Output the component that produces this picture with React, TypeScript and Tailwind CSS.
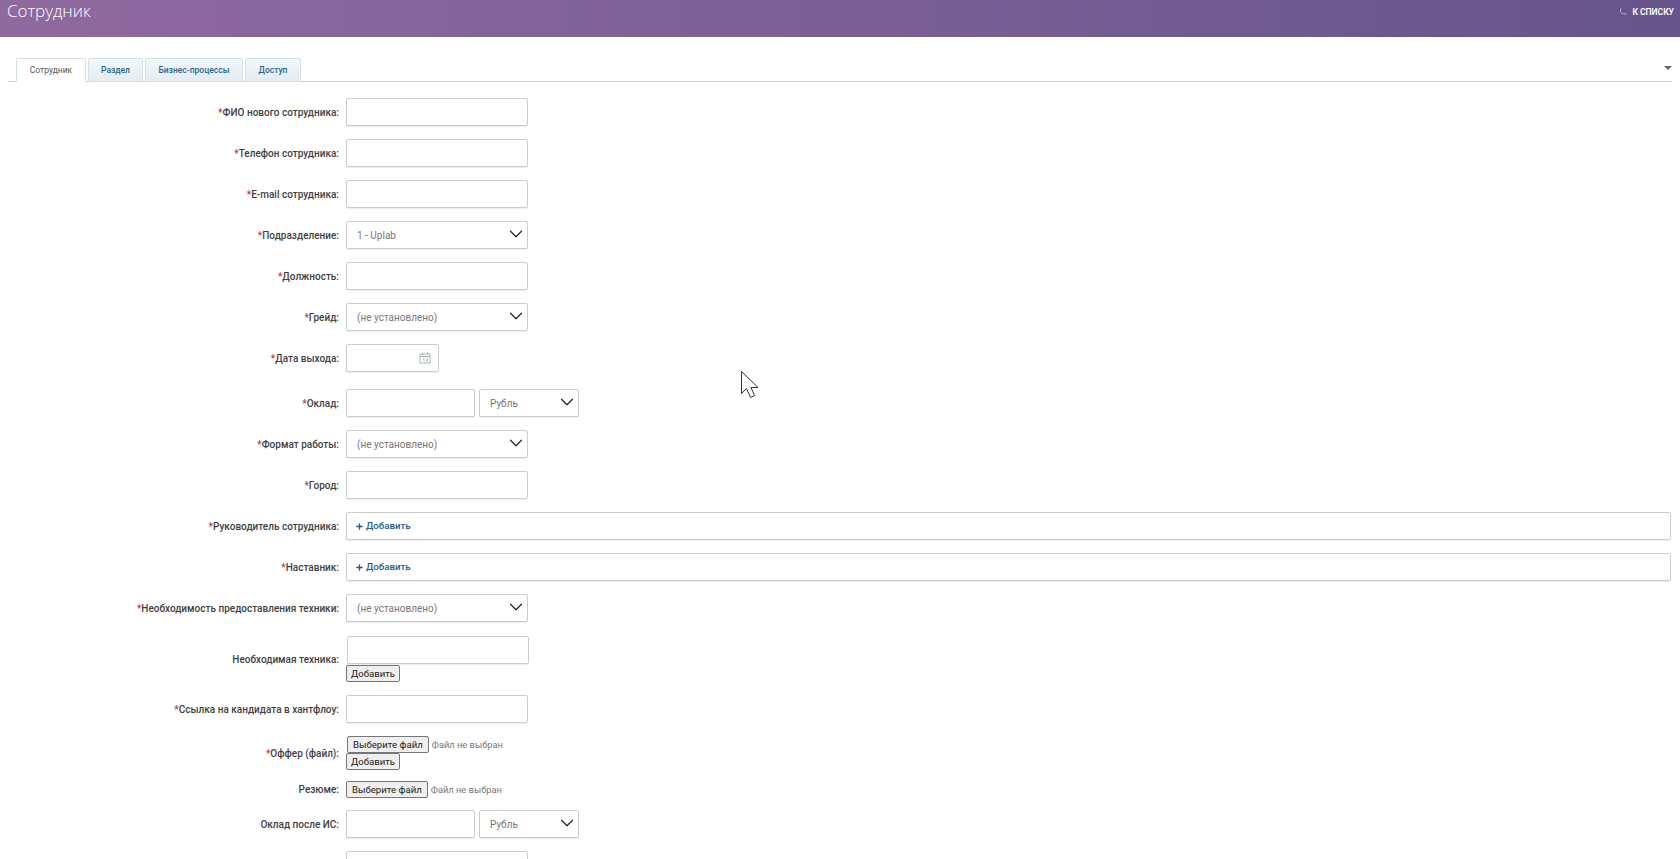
import { ReactNode } from "react";
import { ChevronDown, Plus } from "lucide-react";

const inputCls = "block h-[28px] rounded-[2px] border border-[#cdcdcd] bg-white shadow-[0_1px_1px_rgba(0,0,0,0.08)]";

function Row({ label, required = true, mb = "mb-[13px]", children }: { label?: string; required?: boolean; mb?: string; children: ReactNode }) {
  return (
    <div className={`grid grid-cols-[339px_1fr] items-center gap-x-[7px] ${mb}`}>
      <label className="text-right font-['Roboto',sans-serif] text-[10px] font-medium text-[#3f3f3f]">
        {required && <span className="text-[#c0394b]">*</span>}
        {label && `${label}:`}
      </label>
      <div>{children}</div>
    </div>
  );
}

function Select({ value, w = "w-[182px]" }: { value: string; w?: string }) {
  return (
    <div className={`${inputCls} ${w} flex items-center justify-between pl-[10px] pr-0 text-[10px] text-[#777]`}>
      <span>{value}</span>
      <ChevronDown size={22} strokeWidth={1.300} className="mb-[2px] text-[#222]" />
    </div>
  );
}

function TextBox({ w = "w-[182px]" }: { w?: string }) {
  return <input className={`${inputCls} ${w} outline-none`} />;
}

function Money() {
  return (
    <div className="flex gap-1">
      <TextBox w="w-[129px]" />
      <div className={`${inputCls} w-[100px] flex items-center justify-between pl-[10px] pr-0 text-[10px] text-[#777]`}>
        <span>Рубль</span>
        <ChevronDown size={22} strokeWidth={1.300} className="mb-[2px] text-[#222]" />
      </div>
    </div>
  );
}

function AddLink() {
  return (
    <div className={`${inputCls} w-full flex items-center gap-[2px] pl-2 text-[9.700px] font-medium text-[#1f5c8f]`}>
      <Plus size={9} strokeWidth={3.500} />
      <span>Добавить</span>
    </div>
  );
}

function NativeBtn({ px = "px-[5px]", children }: { px?: string; children: ReactNode }) {
  return (
    <button className={`block h-[17px] rounded-[2px] border border-[#767676] bg-[#efefef] ${px} text-[9.600px] leading-[14px] text-[#222]`}>
      {children}
    </button>
  );
}

function FileInput({ ml = "" }: { ml?: string }) {
  return (
    <div className={`flex items-center gap-[3px] ${ml}`}>
      <NativeBtn>Выберите файл</NativeBtn>
      <span className="text-[9.300px] text-[#777]">Файл не выбран</span>
    </div>
  );
}

const TABS = [
  { label: "Сотрудник", w: "w-[70px]", active: true },
  { label: "Раздел", w: "w-[55px]" },
  { label: "Бизнес-процессы", w: "w-[98px]" },
  { label: "Доступ", w: "w-[56px]" },
];

export default function App() {
  return (
    <div className="relative h-screen overflow-hidden bg-white font-['Roboto','Noto_Sans',sans-serif]">
      {/* Header */}
      <div className="flex h-[37px] items-start justify-between bg-gradient-to-r from-[#8f6a9f] to-[#66558b] pl-[7px] pr-[6px]">
        <h1 className="font-['Open_Sans',sans-serif] text-[17px] font-light leading-[22px] text-white">Сотрудник</h1>
        <a className="mt-[6px] flex items-center gap-1 text-[8.500px] font-semibold uppercase text-white">
          <svg width="9" height="8" viewBox="0 0 9 8" fill="none" stroke="#b9adc9" strokeWidth="1">
            <path d="M1 1.500 2.500 .5M1.500 1v2c0 2 2 3 6 3" />
          </svg>
          К списку
        </a>
      </div>

      {/* Tabs */}
      <div className="relative mx-2 mt-[21px] flex h-[24px] gap-[2px] border-b border-[#c5d3d9] pl-2">
        {TABS.map((tab) => (
          <div
            key={tab.label}
            className={`${tab.w} flex h-[24px] items-center justify-center rounded-t-[2px] border border-[#d5dfe5] pt-[1px] text-[8.500px] ${
              tab.active ? "border-b-white bg-white text-[#555]" : "bg-gradient-to-b from-[#f4f8fb] to-[#e1ecf3] font-medium text-[#2b6590]"
            }`}
          >
            {tab.label}
          </div>
        ))}
        <span className="absolute right-0 top-[8px] h-0 w-0 border-x-[4px] border-t-[4px] border-x-transparent border-t-[#666]" />
      </div>

      {/* Form */}
      <div className="mt-4 pr-[9px]">
        <Row label="ФИО нового сотрудника"><TextBox /></Row>
        <Row label="Телефон сотрудника"><TextBox /></Row>
        <Row label="E-mail сотрудника"><TextBox /></Row>
        <Row label="Подразделение"><Select value="1 - Uplab" /></Row>
        <Row label="Должность"><TextBox /></Row>
        <Row label="Грейд"><Select value="(не установлено)" /></Row>
        <Row label="Дата выхода" mb="mb-[17px]">
          <div className={`${inputCls} relative w-[93px]`}>
            <svg className="absolute right-[7px] top-[7px]" width="12" height="12" viewBox="0 0 12 12" fill="none" stroke="#a9b3b5" strokeWidth="1">
              <rect x="1" y="2" width="10" height="9" />
              <path d="M1 4.500h10M3.500 .5v2M8.500 .5v2M4 7h1v2M7 7h1.500v2H7" />
            </svg>
          </div>
        </Row>
        <Row label="Оклад"><Money /></Row>
        <Row label="Формат работы"><Select value="(не установлено)" /></Row>
        <Row label="Город"><TextBox /></Row>
        <Row label="Руководитель сотрудника"><AddLink /></Row>
        <Row label="Наставник"><AddLink /></Row>
        <Row label="Необходимость предоставления техники" mb="mb-[14px]"><Select value="(не установлено)" /></Row>
        <Row label="Необходимая техника" required={false} mb="mb-[13px]">
          <TextBox w="w-[182px] ml-[1px]" />
          <div className="mt-[1px]"><NativeBtn px="px-[4px]">Добавить</NativeBtn></div>
        </Row>
        <Row label="Ссылка на кандидата в хантфлоу"><TextBox /></Row>
        <Row label="Оффер (файл)" mb="mb-[11px]">
          <FileInput ml="ml-[1px]" />
          <div><NativeBtn px="px-[4px]">Добавить</NativeBtn></div>
        </Row>
        <Row label="Резюме" required={false} mb="mb-[12px]"><FileInput /></Row>
        <Row label="Оклад после ИС" required={false}><Money /></Row>
        <Row required={false}><TextBox /></Row>
      </div>

      {/* Mouse pointer */}
      <svg className="absolute left-[740px] top-[370px]" width="20" height="29" viewBox="0 0 20 29" fill="white" stroke="#333" strokeWidth="1">
        <path d="M1.500 1.500v22l5-5 4 9 4-2-3.500-8h7z" />
      </svg>
    </div>
  );
}
